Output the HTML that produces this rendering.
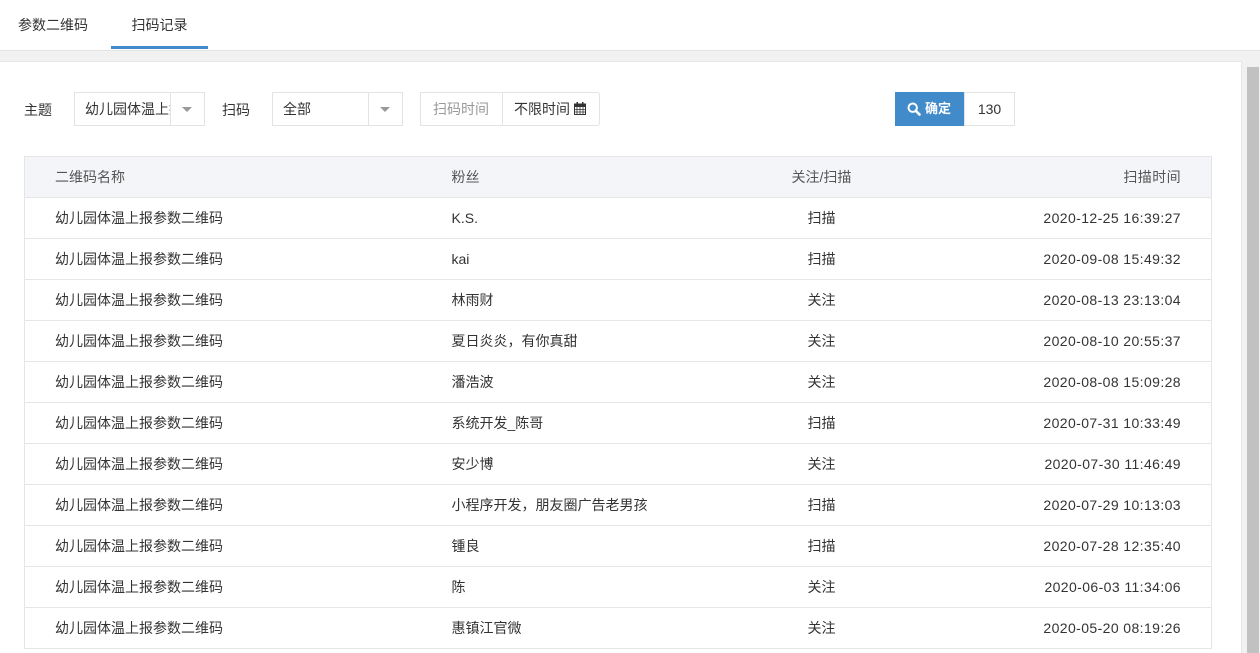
<!DOCTYPE html>
<html style="width:1260px;height:653px;overflow:hidden"><head><meta charset="utf-8"><style>
*{box-sizing:border-box;margin:0;padding:0}
body{width:1260px;height:653px;overflow:hidden;background:#f1f1f1;font-family:"Liberation Sans","Noto Sans CJK SC",sans-serif;font-size:14px;color:#333;position:relative}
.top{position:absolute;left:0;top:0;width:1260px;height:51px;background:#fff;border-bottom:1px solid #e4e4e4}
.tab{position:absolute;top:0;height:48px;line-height:50px;font-size:14px;color:#333}
.sb{position:absolute;left:1246px;top:51px;width:14px;height:602px;background:#f1f1f1}
.thumb{position:absolute;left:1247px;top:67px;width:12px;height:586px;background:#c1c1c1}
.panel{position:absolute;left:0;top:61px;width:1242px;height:592px;background:#fff;border-right:1px solid #e6e6e6;border-top:1px solid #e6e6e6}
.lbl{position:absolute;top:100px;font-size:14px;line-height:20px}
.box{position:absolute;top:92px;height:34px;border:1px solid #e3e3e3;background:#fff;line-height:32px;font-size:14px}
.caret{position:absolute;top:14px;width:0;height:0;border-left:5px solid transparent;border-right:5px solid transparent;border-top:5px solid #999}
table{position:absolute;left:24px;top:156px;width:1188px;border-collapse:collapse;border:1px solid #e5e5e5}
td,th{height:41px;border-bottom:1px solid #e6e6e6;font-weight:normal;font-size:14px;color:#333}
th{background:#f4f5f8;color:#555}
.c1{padding-left:30px;text-align:left;width:427px}
.c2{text-align:left;width:260px}
.c3{text-align:center;width:220px}
.c4{text-align:right;padding-right:30px;letter-spacing:0.4px}
</style></head><body>
<div class="top">
<div class="tab" style="left:18px">参数二维码</div>
<div class="tab" style="left:111px;width:97px;text-align:center;border-bottom:3px solid #428bca;height:49px">扫码记录</div>
</div>
<div class="panel"></div>
<div class="sb"></div><div class="thumb"></div>
<div class="lbl" style="left:24px">主题</div>
<div class="box" style="left:74px;width:131px"><span style="position:absolute;left:10px;width:85px;overflow:hidden;white-space:nowrap">幼儿园体温上报</span><div style="position:absolute;left:95px;top:0;height:32px;border-left:1px solid #e3e3e3;background:#fff;width:34px"></div><div class="caret" style="left:107px"></div></div>
<div class="lbl" style="left:222px">扫码</div>
<div class="box" style="left:272px;width:131px"><span style="position:absolute;left:10px">全部</span><div style="position:absolute;left:95px;top:0;height:32px;border-left:1px solid #e3e3e3"></div><div class="caret" style="left:107px"></div></div>
<div class="box" style="left:420px;width:180px;border-radius:0 3px 3px 0"><span style="position:absolute;left:12px;color:#999">扫码时间</span><div style="position:absolute;left:81px;top:0;height:32px;border-left:1px solid #e3e3e3"></div><span style="position:absolute;left:93px">不限时间</span>
<svg style="position:absolute;left:153px;top:9px" width="12" height="13" viewBox="0 0 12 13"><rect x="0.5" y="2" width="11" height="10.5" fill="none" stroke="#333"/><rect x="0" y="2" width="12" height="3" fill="#333"/><rect x="2.5" y="0" width="1.5" height="3" fill="#333"/><rect x="8" y="0" width="1.5" height="3" fill="#333"/><path d="M0 7.5H12M0 10H12M3 5V13M6 5V13M9 5V13" stroke="#333" stroke-width="0.8"/></svg></div>
<div style="position:absolute;left:895px;top:92px;width:69px;height:34px;background:#428bca;color:#fff;line-height:34px;font-weight:bold;font-size:13px">
<svg style="position:absolute;left:12px;top:10px" width="14" height="14" viewBox="0 0 14 14"><circle cx="5.7" cy="5.7" r="4.2" fill="none" stroke="#fff" stroke-width="2"/><path d="M8.8 8.8L12.5 12.5" stroke="#fff" stroke-width="2.6" stroke-linecap="round"/></svg>
<span style="position:absolute;left:30px">确定</span></div>
<div class="box" style="left:964px;width:51px;text-align:center;font-size:14px">130</div>
<table>
<tr><th class="c1">二维码名称</th><th class="c2">粉丝</th><th class="c3">关注/扫描</th><th class="c4">扫描时间</th></tr>
<tr><td class="c1">幼儿园体温上报参数二维码</td><td class="c2">K.S.</td><td class="c3">扫描</td><td class="c4">2020-12-25 16:39:27</td></tr>
<tr><td class="c1">幼儿园体温上报参数二维码</td><td class="c2">kai</td><td class="c3">扫描</td><td class="c4">2020-09-08 15:49:32</td></tr>
<tr><td class="c1">幼儿园体温上报参数二维码</td><td class="c2">林雨财</td><td class="c3">关注</td><td class="c4">2020-08-13 23:13:04</td></tr>
<tr><td class="c1">幼儿园体温上报参数二维码</td><td class="c2">夏日炎炎，有你真甜</td><td class="c3">关注</td><td class="c4">2020-08-10 20:55:37</td></tr>
<tr><td class="c1">幼儿园体温上报参数二维码</td><td class="c2">潘浩波</td><td class="c3">关注</td><td class="c4">2020-08-08 15:09:28</td></tr>
<tr><td class="c1">幼儿园体温上报参数二维码</td><td class="c2">系统开发_陈哥</td><td class="c3">扫描</td><td class="c4">2020-07-31 10:33:49</td></tr>
<tr><td class="c1">幼儿园体温上报参数二维码</td><td class="c2">安少博</td><td class="c3">关注</td><td class="c4">2020-07-30 11:46:49</td></tr>
<tr><td class="c1">幼儿园体温上报参数二维码</td><td class="c2">小程序开发，朋友圈广告老男孩</td><td class="c3">扫描</td><td class="c4">2020-07-29 10:13:03</td></tr>
<tr><td class="c1">幼儿园体温上报参数二维码</td><td class="c2">锺良</td><td class="c3">扫描</td><td class="c4">2020-07-28 12:35:40</td></tr>
<tr><td class="c1">幼儿园体温上报参数二维码</td><td class="c2">陈</td><td class="c3">关注</td><td class="c4">2020-06-03 11:34:06</td></tr>
<tr><td class="c1">幼儿园体温上报参数二维码</td><td class="c2">惠镇江官微</td><td class="c3">关注</td><td class="c4">2020-05-20 08:19:26</td></tr>
</table>
</body></html>
